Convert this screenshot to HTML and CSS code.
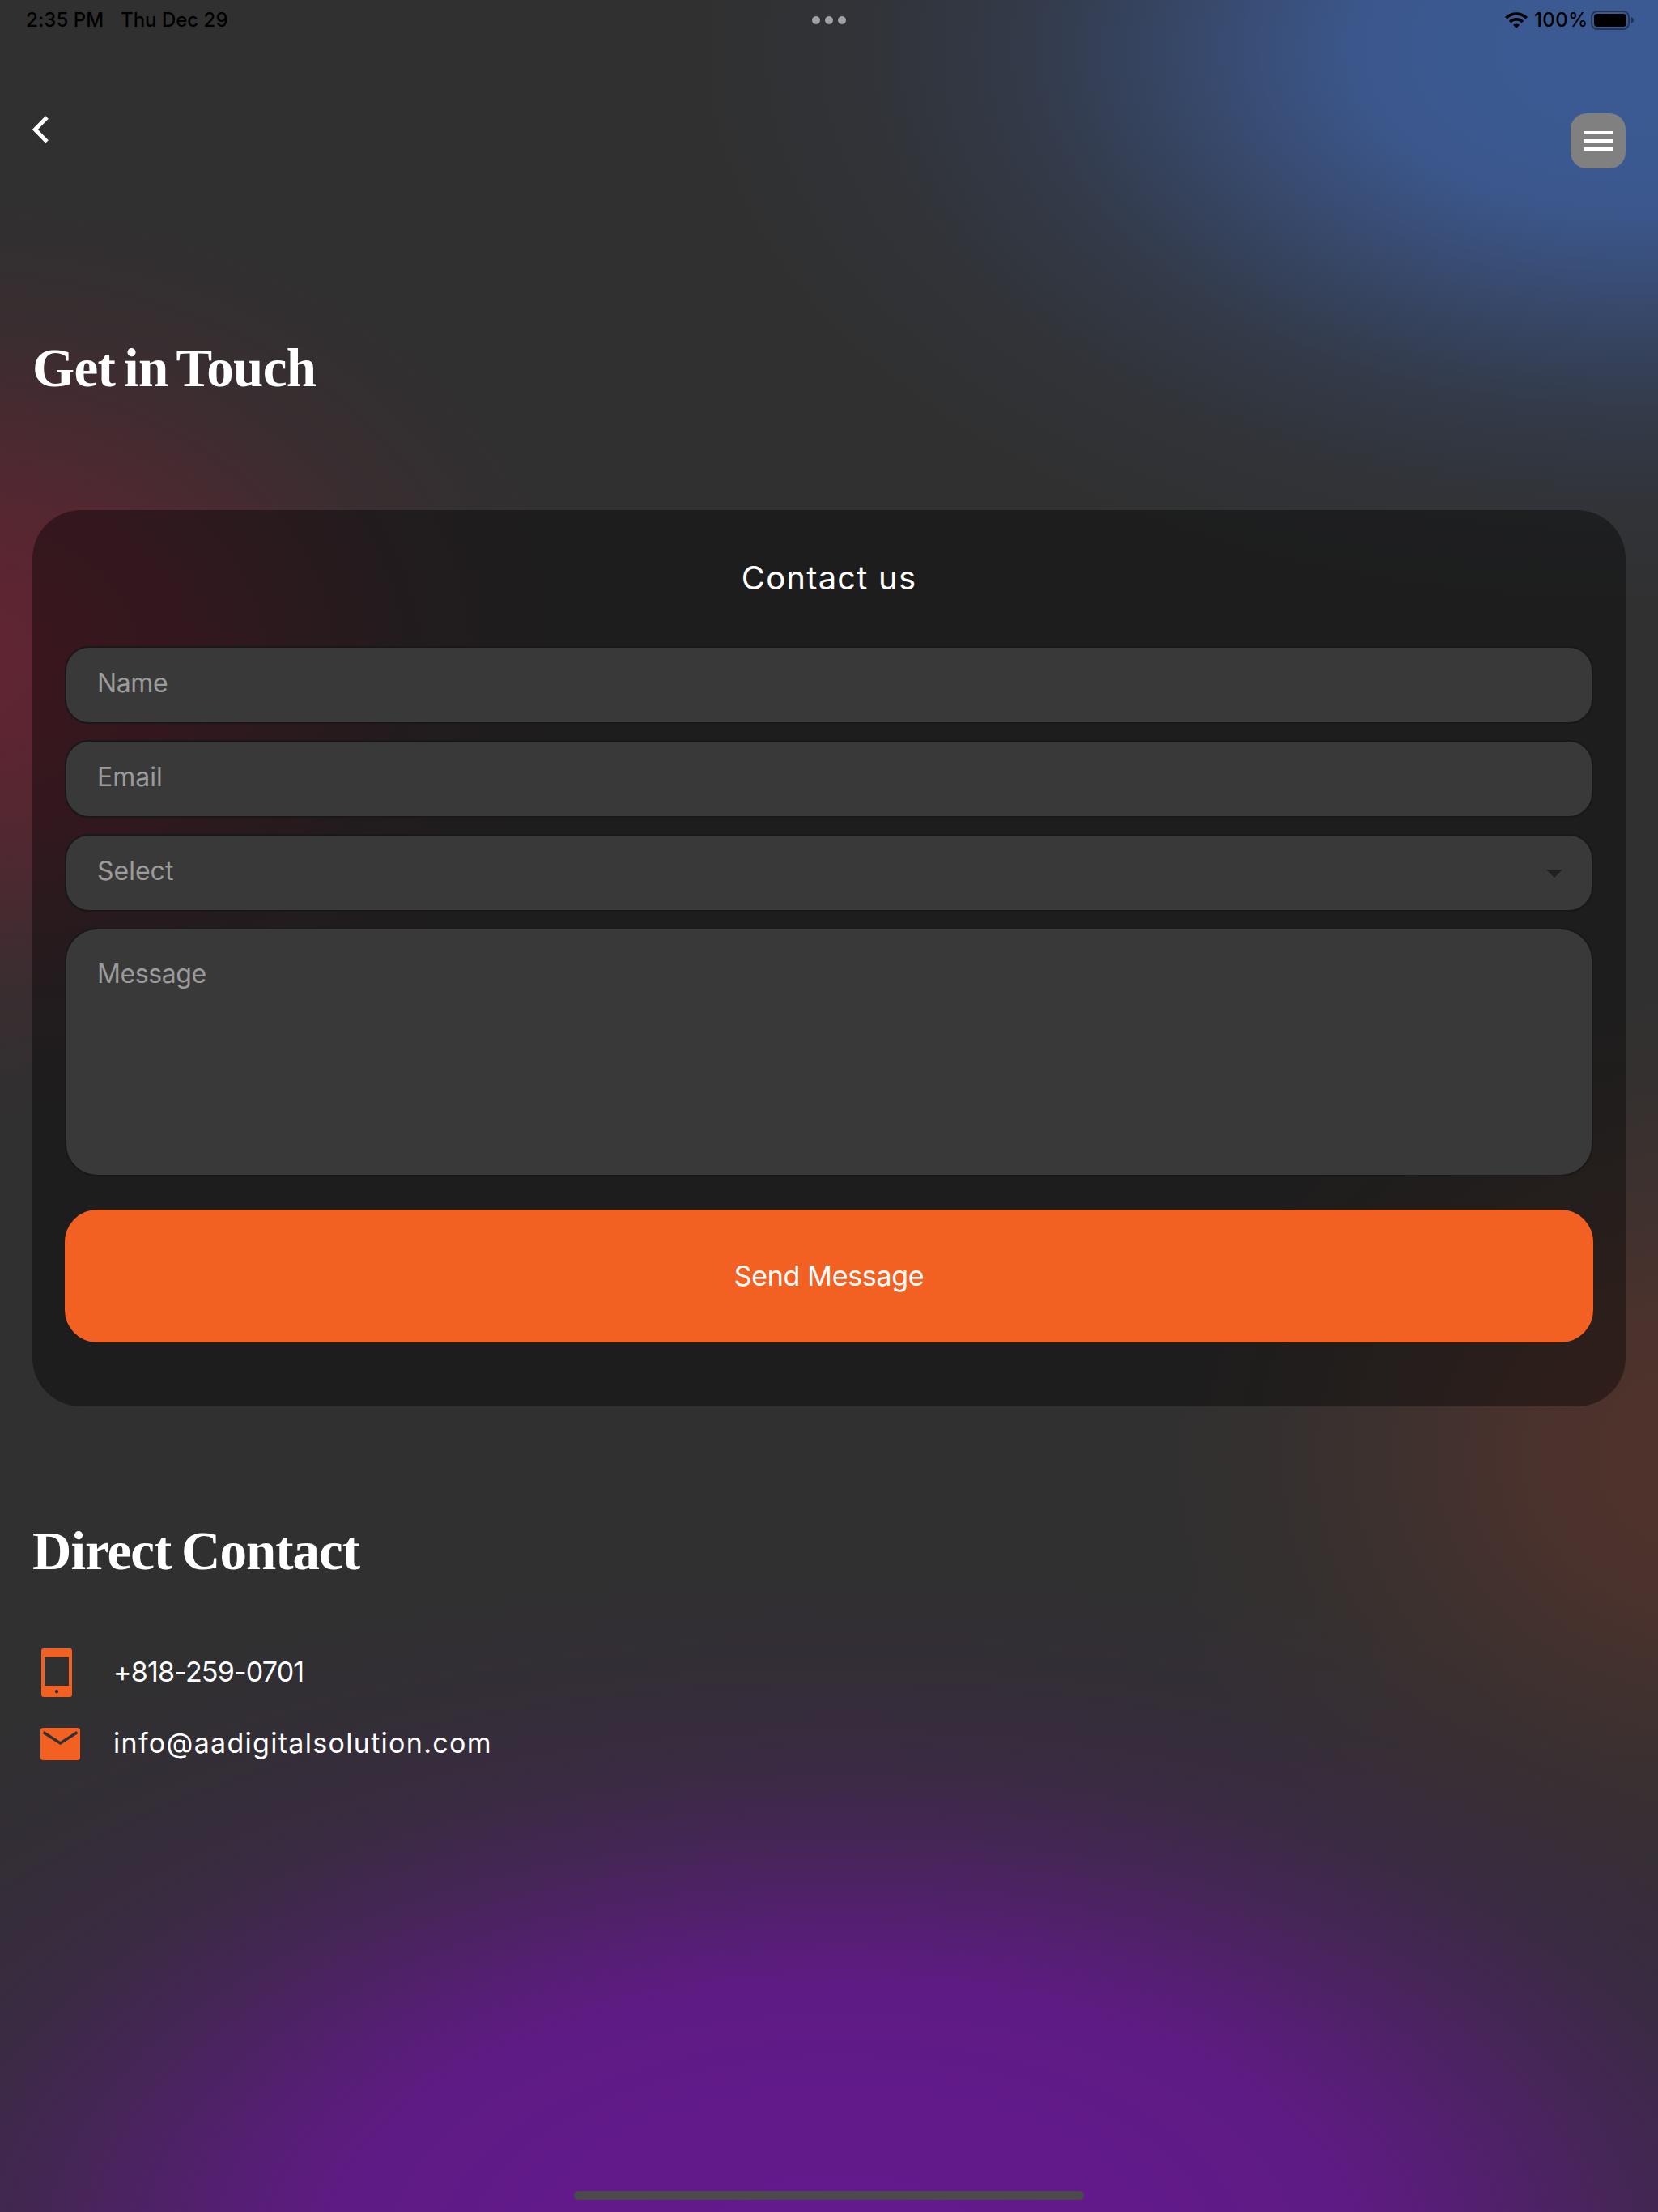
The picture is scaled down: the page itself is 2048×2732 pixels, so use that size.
FILE: index.html
```html
<!DOCTYPE html>
<html lang="en">
<head>
<meta charset="utf-8">
<title>Get in Touch</title>
<link rel="stylesheet" href="styles.css">
</head>
<body>
<div class="screen">
  <div class="status">
    <div class="status-side"><span class="time">2:35 PM</span><span class="date">Thu Dec 29</span></div>
    <div class="dots"><i></i><i></i><i></i></div>
    <div class="status-side status-right">
      <svg class="wifi" viewBox="0 0 28 20" fill="none" stroke="#000" stroke-width="3.6"><path d="M1.3 7.2a18 18 0 0 1 25.4 0"/><path d="M6 12a11.4 11.4 0 0 1 16 0"/><path d="M14 20l-4-4.2a6 6 0 0 1 8 0z" fill="#000" stroke="none"/></svg>
      <span class="percent">100%</span>
      <svg class="battery" viewBox="0 0 54 24"><rect x="1" y="1" width="46" height="22" rx="7" fill="none" stroke="#000" stroke-opacity=".4" stroke-width="2"/><rect x="4" y="4" width="40" height="16" rx="4"/><path d="M50 8q3 1.500 3 4t-3 4z" fill-opacity=".45"/></svg>
    </div>
  </div>
  <header class="header">
    <svg class="back" viewBox="0 0 20 34" fill="none" stroke="#fff" stroke-width="5"><path d="M18 2L3.300 17 18 32"/></svg>
    <button class="menu" aria-label="Menu"><i></i><i></i><i></i></button>
  </header>
  <h1 class="title">Get in Touch</h1>
  <form class="card">
    <h2 class="card-title"><span>Contact us</span></h2>
    <div class="field"><span class="t-name">Name</span></div>
    <div class="field"><span class="t-email">Email</span></div>
    <div class="field"><span class="t-select">Select</span><i class="caret"></i></div>
    <div class="field area"><span class="t-message">Message</span></div>
    <button class="send" type="button">Send Message</button>
  </form>
  <h1 class="title direct">Direct Contact</h1>
  <div class="contact phone">
    <svg class="phone-icon" viewBox="0 0 38 60"><path fill="#f26122" fill-rule="evenodd" d="M3 0h32q3 0 3 3v54q0 3-3 3H3q-3 0-3-3V3q0-3 3-3zM4 10.500v35.500h30V10.500zM19 51a2.200 2.200 0 1 0 .01 0z"/></svg>
    <span class="number">+818-259-0701</span>
  </div>
  <div class="contact mail">
    <svg class="mail-icon" viewBox="0 0 49 40"><rect width="49" height="40" rx="3.500" fill="#f26122"/><path d="M3.500 5.500L24.500 19 45.500 5.500" fill="none" stroke="#333032" stroke-width="3.300"/></svg>
    <span class="address">info@aadigitalsolution.com</span>
  </div>
  <div class="home"></div>
</div>
</body>
</html>
```
FILE: styles.css
```css
* { box-sizing: border-box; margin: 0; }
body { background: #303030; }
.screen {
  width: 2048px; height: 2732px; overflow: hidden;
  display: flex; flex-direction: column;
  font-family: Inter, "Liberation Sans", sans-serif; color: #fff;
  background:
    radial-gradient(ellipse 1180px 700px at 2020px 60px, #3b5a93 0%, #3b5991 20%, #3b568a 30%, rgba(59,84,134,.82) 40%, rgba(58,82,130,.57) 52%, rgba(57,78,122,.32) 65%, rgba(56,74,112,.13) 80%, rgba(56,74,112,0) 100%),
    radial-gradient(ellipse 800px 590px at -60px 815px, #622533 0%, #5c2531 18%, rgba(92,37,49,.8) 36%, rgba(92,37,49,.5) 53%, rgba(85,37,49,.25) 70%, rgba(85,37,49,.09) 86%, rgba(85,37,49,0) 100%),
    radial-gradient(ellipse 710px 600px at 2120px 1800px, #51322c 0%, #4f322c 16%, rgba(79,50,44,.8) 36%, rgba(79,50,44,.45) 55%, rgba(79,50,44,.18) 75%, rgba(79,50,44,0) 100%),
    radial-gradient(ellipse 1650px 860px at 1040px 2780px, #631a8d 0%, #621a8a 22%, #5e1b84 38%, rgba(91,28,125,.85) 47%, rgba(85,30,115,.57) 59%, rgba(78,32,104,.32) 70%, rgba(70,34,92,.14) 84%, rgba(64,38,84,0) 100%),
    #303030;
}
.status { height: 50px; flex: none; display: grid; grid-template-columns: 1fr 64px 1fr; align-items: center; padding: 0 29px 0 32px; color: #000; font-size: 24px; font-weight: 500; line-height: 48px; }
.status-side { display: flex; height: 48px; align-items: center; }
.time { width: 117px; letter-spacing: .1px; white-space: nowrap; }
.date { letter-spacing: 0; }
.dots { display: flex; gap: 6px; padding-left: 9px; }
.dots i { width: 10px; height: 10px; border-radius: 5px; background: #a1a1a6; }
.status-right { justify-content: flex-end; }
.wifi { width: 28px; height: 20px; margin-right: 8px; }
.percent { width: 70px; letter-spacing: .4px; }
.battery { width: 54px; height: 24px; }
.header { height: 170px; flex: none; display: flex; justify-content: space-between; align-items: flex-start; padding: 90px 40px 0; }
.back { width: 20px; height: 34px; margin-top: 3px; }
.menu { width: 68px; height: 68px; border: 0; border-radius: 20px; background: #808080; display: flex; flex-direction: column; gap: 6px; align-items: center; justify-content: center; padding: 0; }
.menu i { width: 36px; height: 4px; background: #fff; }
.title { font-family: "Liberation Serif", serif; font-size: 67px; font-weight: 700; letter-spacing: -.7px; word-spacing: -5px; line-height: 80px; height: 80px; flex: none; margin: 194px 0 0 40px; white-space: nowrap; }
.card { flex: none; width: 1968px; height: 1107px; margin: 136px 40px 0; padding: 60px 40px 0; border-radius: 60px; background: rgba(0,0,0,.39); display: flex; flex-direction: column; gap: 20px; }
.card-title { font: 400 40px/48px Inter, sans-serif; height: 88px; text-align: center; letter-spacing: 1.2px; }
.field { height: 96px; flex: none; border: 2px solid #181818; border-radius: 30px; background: #393939; color: #9b9b9b; font-size: 32px; line-height: 40px; padding: 24px 36px 0 38px; display: flex; justify-content: space-between; }
.t-name, .t-message { letter-spacing: -.4px; }
.caret { margin-top: 18px; width: 20px; height: 10px; background: #202020; clip-path: polygon(0 0, 100% 0, 50% 100%); }
.area { height: 307px; border-radius: 40px; padding-top: 35px; }
.send { height: 164px; margin-top: 21px; flex: none; border: 0; border-radius: 40px; background: #f26122; color: #fff; font: 400 34px/40px Inter, sans-serif; letter-spacing: -.3px; }
.direct { margin-top: 138px; letter-spacing: -1px; word-spacing: -3px; }
.contact { display: flex; align-items: center; flex: none; font: 400 34px/44px Inter, sans-serif; white-space: nowrap; }
.phone { height: 60px; margin: 81px 0 0 51px; }
.phone-icon { width: 38px; height: 60px; margin-right: 51px; }
.mail { height: 40px; margin: 38px 0 0 50px; }
.mail-icon { width: 49px; height: 40px; margin-right: 41px; }
.number, .address { position: relative; top: -1px; }
.number { letter-spacing: -.8px; }
.address { letter-spacing: 1.3px; }
.home { width: 630px; height: 11px; border-radius: 6px; background: #4a4a4a; margin: auto auto 15px 709px; flex: none; }
```
